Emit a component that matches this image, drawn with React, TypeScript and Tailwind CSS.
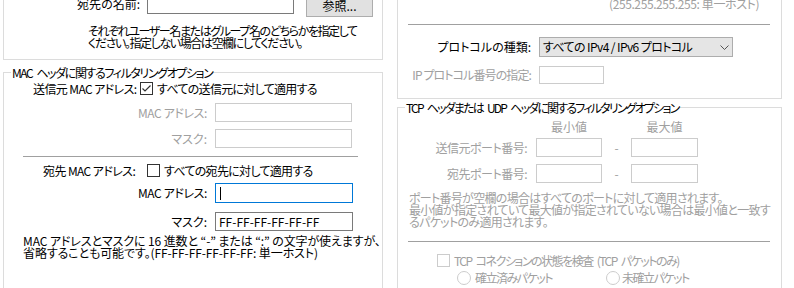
import type { ReactNode } from "react";

const BOX = "border-[#dcdcdc]";
const DIM = "text-[#a0a0a0]";

function Field({ w, h = 19, disabled, focused, children }: { w: number; h?: number; disabled?: boolean; focused?: boolean; children?: ReactNode }) {
  const border = focused ? "border-[#0078d7]" : disabled ? "border-[#cccccc]" : "border-[#7a7a7a]";
  return (
    <div className={`flex shrink-0 items-center border bg-white pl-[3px] ${border}`} style={{ width: w, height: h }}>
      {children}
    </div>
  );
}

function Check({ checked, disabled }: { checked?: boolean; disabled?: boolean }) {
  return (
    <svg width="13" height="13" viewBox="0 0 13 13" className="shrink-0">
      <rect x="0.5" y="0.5" width="12" height="12" fill="#fff" stroke={disabled ? "#cccccc" : "#333333"} />
      {checked && <path d="M2.5 6.5 L5 9 L10.5 3.5" fill="none" stroke="#333333" strokeWidth="1.2" />}
    </svg>
  );
}

function Radio() {
  return (
    <svg width="14" height="14" viewBox="0 0 14 14" className="shrink-0">
      <circle cx="7" cy="7" r="6.5" fill="#fff" stroke="#cccccc" />
    </svg>
  );
}

function Rule() {
  return <div className="ml-[10px] h-px w-[362px] shrink-0 bg-[#a0a0a0]" />;
}

export default function App() {
  return (
    <div className="h-[288px] w-[794px] overflow-hidden bg-white font-['Noto_Sans_CJK_JP',sans-serif] text-[12px] leading-[12px] text-black [font-feature-settings:'palt']">
      <div className="flex h-full pl-[3px]">
        {/* ---- Left column ---- */}
        <div className="flex w-[380px] shrink-0 flex-col">
          {/* user / group box (top cut off) */}
          <div className={`-mt-[10px] h-[70px] shrink-0 border-x border-b ${BOX}`}>
            <div className="flex items-start pt-[3px]">
              <div className="flex h-[21px] w-[136px] items-center justify-end whitespace-nowrap">宛先の名前:</div>
              <div className="ml-[7px]">
                <Field w={147} h={21} />
              </div>
              <div className="ml-[12px] mt-[1px] flex h-[23px] w-[67px] items-center justify-center border border-[#adadad] bg-[#e1e1e1]">
                参照...
              </div>
            </div>
            <div className="mt-[8px] whitespace-nowrap pl-[84px] tracking-[-1.4px]">
              それぞれユーザー名またはグループ名のどちらかを指定して
              <br />
              ください。指定しない場合は空欄にしてください。
            </div>
          </div>

          {/* MAC header options */}
          <div className={`mt-[12px] flex flex-1 flex-col border-x border-t ${BOX}`}>
            <div className="-mt-[6px] ml-[7px] w-fit whitespace-nowrap bg-white px-[1px] tracking-[-1.4px]">
              MAC<span className="ml-[4px]">ヘッダに関するフィルタリングオプション</span>
            </div>

            <div className="mt-[3px] flex h-[13px] items-center pl-[29px]">
              <span className="w-[107px] whitespace-nowrap tracking-[-0.6px]">送信元 MAC アドレス:</span>
              <Check checked />
              <span className="ml-[4px] whitespace-nowrap tracking-[-0.7px]">すべての送信元に対して適用する</span>
            </div>
            <div className="mt-[8px] flex items-center">
              <span className={`w-[203px] text-right tracking-[-0.4px] ${DIM}`}>MAC アドレス:</span>
              <div className="ml-[8px]">
                <Field w={137} disabled />
              </div>
            </div>
            <div className="mt-[7px] flex items-center">
              <span className={`w-[203px] text-right ${DIM}`}>マスク:</span>
              <div className="ml-[8px]">
                <Field w={137} disabled />
              </div>
            </div>

            <div className="ml-[19px] mt-[8px] h-px w-[335px] bg-[#a0a0a0]" />

            <div className="mt-[7px] flex h-[13px] items-center pl-[39px]">
              <span className="w-[104px] whitespace-nowrap tracking-[-0.6px]">宛先 MAC アドレス:</span>
              <Check />
              <span className="ml-[4px] whitespace-nowrap tracking-[-0.7px]">すべての宛先に対して適用する</span>
            </div>
            <div className="mt-[6px] flex items-center">
              <span className="w-[203px] text-right tracking-[-0.4px]">MAC アドレス:</span>
              <div className="ml-[8px]">
                <Field w={138} h={20} focused>
                  <div className="ml-[1px] h-[13px] w-px bg-black" />
                </Field>
              </div>
            </div>
            <div className="mt-[9px] flex items-center">
              <span className="w-[203px] text-right">マスク:</span>
              <div className="ml-[8px]">
                <Field w={138}>FF-FF-FF-FF-FF-FF</Field>
              </div>
            </div>
            <div className="mt-[4px] whitespace-nowrap pl-[19px] tracking-[-0.1px]">
              MAC アドレスとマスクに 16 進数と “-” または “:” の文字が使えますが、
              <br />
              省略することも可能です。(FF-FF-FF-FF-FF-FF: 単一ホスト)
            </div>
          </div>
        </div>

        {/* ---- Right column ---- */}
        <div className="ml-[14px] flex w-[385px] shrink-0 flex-col">
          {/* IP box (top cut off) */}
          <div className={`-mt-[10px] flex h-[109px] shrink-0 flex-col border-x border-b ${BOX}`}>
            <div className={`whitespace-nowrap pl-[211px] pt-[8px] tracking-[-0.4px] ${DIM}`}>(255.255.255.255: 単一ホスト)</div>
            <div className="mt-[14px]">
              <Rule />
            </div>
            <div className="mt-[12px] flex items-center">
              <span className="w-[133px] whitespace-nowrap text-right">プロトコルの種類:</span>
              <div className="ml-[8px] flex h-[20px] w-[194px] items-center justify-between border border-[#adadad] bg-[#e5e5e5] pl-[3px] pr-[3px]">
                <span className="whitespace-nowrap tracking-[-0.6px]">すべての IPv4 / IPv6 プロトコル</span>
                <svg width="9" height="5" viewBox="0 0 9 5">
                  <path d="M0.5 0.5 L4.5 4.5 L8.5 0.5" fill="none" stroke="#555" />
                </svg>
              </div>
            </div>
            <div className="mt-[9px] flex items-center">
              <span className={`w-[133px] whitespace-nowrap text-right tracking-[-0.9px] ${DIM}`}>IP プロトコル番号の指定:</span>
              <div className="ml-[8px]">
                <Field w={65} h={18} disabled />
              </div>
            </div>
          </div>

          {/* TCP / UDP header options */}
          <div className={`mt-[8px] flex flex-1 flex-col border-x border-t ${BOX}`}>
            <div className="-mt-[6px] ml-[7px] w-fit whitespace-nowrap bg-white px-[1px] tracking-[-1.8px]">
              TCP<span className="ml-[4px]">ヘッダまたは</span>
              <span className="ml-[4px]">UDP</span>
              <span className="ml-[4px]">ヘッダに関するフィルタリングオプション</span>
            </div>

            <div className={`mt-[7px] flex ${DIM}`}>
              <span className="w-[138px]" />
              <span className="w-[66px] text-center">最小値</span>
              <span className="w-[29px]" />
              <span className="w-[67px] text-center">最大値</span>
            </div>
            <div className="mt-[5px] flex items-center">
              <span className={`w-[129px] whitespace-nowrap text-right tracking-[-0.5px] ${DIM}`}>送信元ポート番号:</span>
              <div className="ml-[9px]">
                <Field w={66} disabled />
              </div>
              <span className={`w-[29px] text-center ${DIM}`}>-</span>
              <Field w={67} disabled />
            </div>
            <div className="mt-[7px] flex items-center">
              <span className={`w-[129px] whitespace-nowrap text-right tracking-[-0.5px] ${DIM}`}>宛先ポート番号:</span>
              <div className="ml-[9px]">
                <Field w={66} disabled />
              </div>
              <span className={`w-[29px] text-center ${DIM}`}>-</span>
              <Field w={67} disabled />
            </div>

            <div className={`mt-[9px] whitespace-nowrap pl-[11px] tracking-[-0.7px] ${DIM}`}>
              ポート番号が空欄の場合はすべてのポートに対して適用されます。
              <br />
              最小値が指定されていて最大値が指定されていない場合は最小値と一致す
              <br />
              るパケットのみ適用されます。
            </div>

            <div className="mt-[13px]">
              <Rule />
            </div>

            <div className="mt-[12px] flex h-[13px] items-center pl-[39px]">
              <Check disabled />
              <span className={`ml-[4px] whitespace-nowrap tracking-[-1.5px] ${DIM}`}>
                TCP<span className="ml-[4px]">コネクションの状態を検査</span>
                <span className="ml-[4px]">(TCP</span>
                <span className="ml-[4px]">パケットのみ)</span>
              </span>
            </div>
            <div className={`mt-[4px] flex h-[14px] items-center pl-[59px] ${DIM}`}>
              <div className="flex w-[149px] items-center">
                <Radio />
                <span className="ml-[4px] whitespace-nowrap tracking-[-1.5px]">確立済みパケット</span>
              </div>
              <Radio />
              <span className="ml-[2px] whitespace-nowrap tracking-[-1.5px]">未確立パケット</span>
            </div>
          </div>
        </div>
      </div>
    </div>
  );
}
